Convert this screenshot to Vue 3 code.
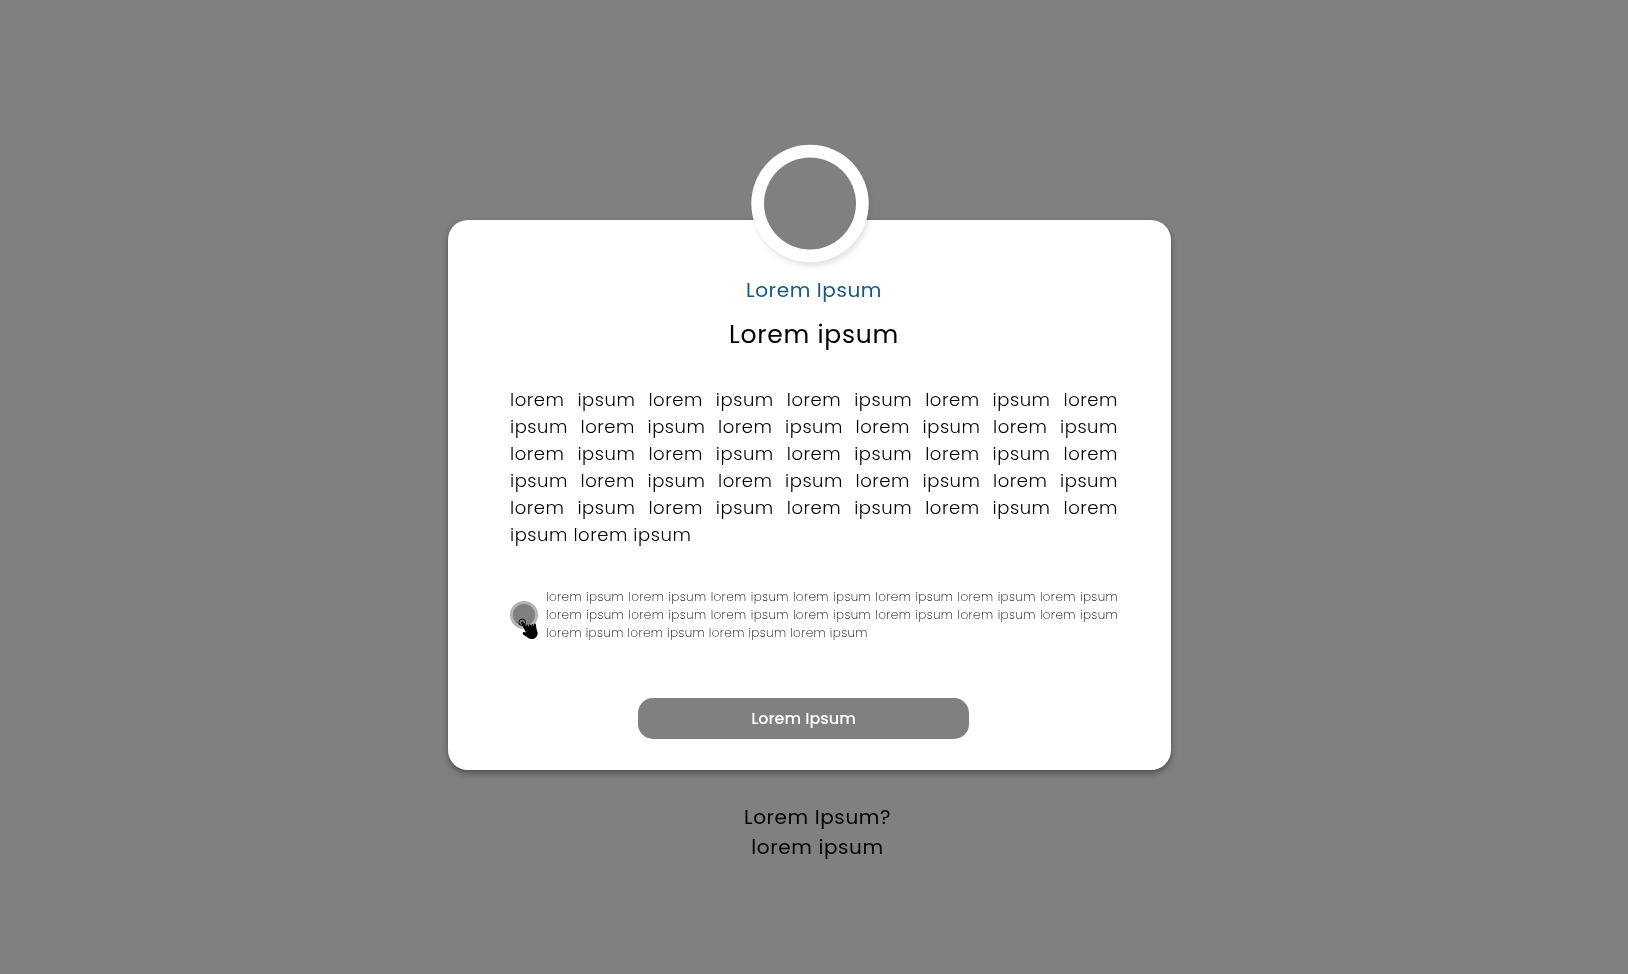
<script setup>
const bodyText = Array(24).fill('lorem ipsum').join(' ')
const noteText = Array(18).fill('lorem ipsum').join(' ')
</script>

<template>
  <main class="page">
    <section class="card">
      <svg class="avatar" viewBox="0 0 120 120" width="120" height="120">
        <circle cx="60" cy="59.5" r="58.7" fill="#fff" />
        <circle cx="60" cy="59.5" r="46" fill="#808080" />
      </svg>
      <p class="brand">Lorem Ipsum</p>
      <h1 class="title">Lorem ipsum</h1>
      <p class="body">{{ bodyText }}</p>
      <div class="consent">
        <div class="toggle">
          <svg class="hand" viewBox="0 0 20 22" width="20" height="22">
            <circle cx="4.2" cy="4.3" r="3.3" fill="none" stroke="#000" stroke-width="0.9" />
            <path
              d="M3.6 3.7C4.4 3.1 5.2 3.5 5.6 4.4L8.3 8.6L8.4 7.2C8.8 6.3 9.8 6.5 10.1 7.4L10.8 8.8L11 6.9C11.5 6 12.5 6.3 12.8 7.2L13.4 8.4L13.6 6.5C14.2 5.7 15.1 6 15.4 6.9L16 8.4L16.1 6.1C16.7 5.2 17.8 5.5 17.9 6.6L18.4 10.6L19.6 14.2C20.1 17 18.6 19.2 16.4 20.5C13.8 21.6 11 21 9.2 19.2L5.2 16.6C4.2 15.6 4.7 14 6 14L8 14.4L3.2 5.3C2.9 4.7 3 4 3.6 3.7Z"
              fill="#000"
            />
          </svg>
        </div>
        <p class="note">{{ noteText }}</p>
      </div>
      <button class="action"><span class="label">Lorem Ipsum</span></button>
    </section>
    <footer class="footer">
      <p>Lorem Ipsum?</p>
      <p>lorem ipsum</p>
    </footer>
  </main>
</template>

<style>
body {
  background: #808080;
}
</style>

<style scoped>
.page {
  box-sizing: border-box;
  width: 1628px;
  height: 974px;
  padding: 220px 0 0 448px;
  overflow: hidden;
  background: #808080;
  color: #000;
  font-family: Poppins, Inter, "Open Sans", sans-serif;
}
p,
h1 {
  margin: 0;
  font-weight: 400;
  letter-spacing: 0.03em;
  will-change: transform;
}
.card {
  position: relative;
  box-sizing: border-box;
  width: 723px;
  height: 550px;
  padding: 55px 53px 0 62px;
  border-radius: 20px;
  background: #fff;
  box-shadow: 0 3px 6px rgba(0, 0, 0, 0.4);
}
.avatar {
  position: absolute;
  top: -76px;
  left: 302px;
  overflow: visible;
  filter: drop-shadow(2px 4px 2.5px rgba(0, 0, 0, 0.1));
}
.brand {
  color: #17587f;
  font-size: 20px;
  line-height: 30px;
  text-align: center;
}
.title {
  margin-top: 11px;
  font-size: 25px;
  line-height: 38px;
  text-align: center;
}
.body {
  height: 162px;
  margin-top: 32px;
  font-size: 18px;
  font-weight: 300;
  line-height: 27px;
  text-align: justify;
}
.consent {
  display: flex;
  height: 56px;
  margin-top: 40px;
}
.toggle {
  position: relative;
  box-sizing: border-box;
  flex: none;
  width: 28px;
  height: 28px;
  margin: 13px 8px 0 0;
  border: 3px solid #b3b3b3;
  border-radius: 50%;
  background: #808080;
}
.hand {
  position: absolute;
  top: 14px;
  left: 5px;
}
.note {
  flex: 1;
  font-size: 12px;
  font-weight: 275;
  line-height: 18px;
  text-align: justify;
}
.action {
  display: block;
  width: 331px;
  height: 41px;
  margin: 54px 0 0 128px;
  padding: 0;
  border: 0;
  border-radius: 15px;
  background: #808080;
  color: #fff;
  font: 500 16px/41px Poppins, Inter, "Open Sans", sans-serif;
}
.label {
  display: block;
  will-change: transform;
}
.footer {
  width: 739px;
  padding-top: 32px;
  font-size: 20px;
  line-height: 30px;
  text-align: center;
}
</style>
